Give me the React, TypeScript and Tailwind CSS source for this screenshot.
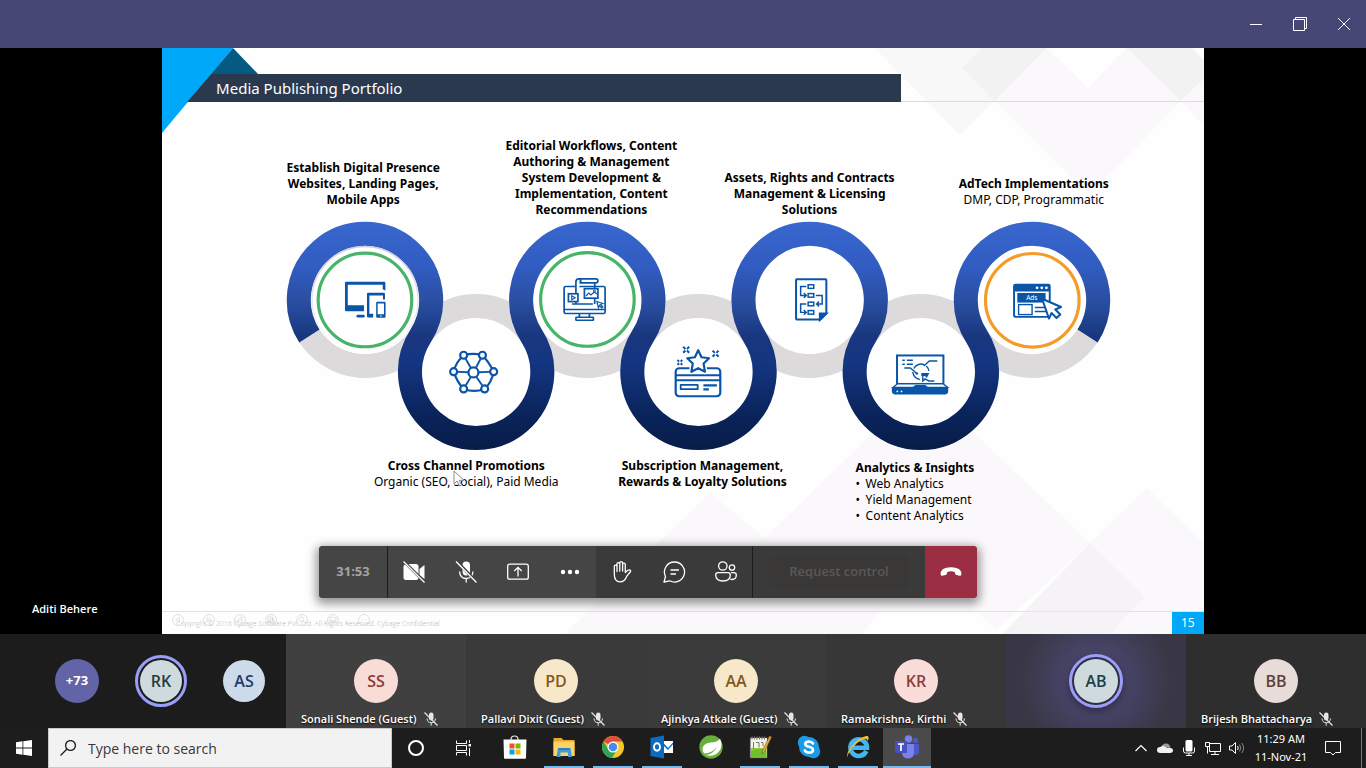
import React from "react";

const NAVY = "#0a55a8";

/* ---------- slide artwork ---------- */

function SlideBackdrop() {
  return (
    <svg className="absolute inset-0 h-full w-full" viewBox="162 48 1042 586" preserveAspectRatio="none" aria-hidden="true">
      <rect x="162" y="48" width="1042" height="586" fill="#fefefe" />
      <path d="M875 48H1047L960 135Z" fill="#f9f8f9" />
      <path d="M962 68L982 48H1047L995 101Z" fill="#f3f2f3" />
      <path d="M995 101L1047 48L1088 88L1127 48L1181 101L1090 195Z" fill="#faf8fa" />
      <path d="M1127 48H1192L1204 60V79L1181 101Z" fill="#f3f2f3" />
      <path d="M1181 101L1204 79V125Z" fill="#faf8fa" />
      <path d="M565 634L658 543L710 493L765 538L923 384L1090 543L997 630L977 612H881L862 634Z" fill="#faf8fb" />
      <path d="M1090 543L1147 488L1204 543V634H1007Z" fill="#faf8fb" />
      <path d="M1090 543L1145 597L1110 634H1003Z" fill="#f5f3f6" />
      <path d="M997 630L977 612H881L862 634H1000Z" fill="#fefefe" />
      <path d="M162 48H233L162 133Z" fill="#00a8fa" />
      <path d="M233 48L258 74H211Z" fill="#055a83" />
      <rect x="190" y="101" width="1014" height="1" fill="#b5e9f8" />
      <rect x="162" y="611" width="1042" height="1" fill="#c2effb" />
    </svg>
  );
}

function DevicesIcon() {
  return (
    <g fill={NAVY}>
      <path d="M345 283q0-1.200 1.200-1.200h38q1.200 0 1.200 1.200v7.500l-2.600-1.300v-4.500h-35v20.500h16.200v6h-17.800q-1.200 0-1.200-1.200z" />
      <rect x="356.500" y="314.800" width="8.200" height="2.800" rx="1.200" />
      <path d="M367 294q0-1.200 1.200-1.200h15.600q1.200 0 1.200 1.200v5.600h-2v-4.200h-13.600v18.400h3.800v3.800h-5q-1.200 0-1.200-1.200z" />
      <path fillRule="evenodd" d="M376.200 302.800q0-1 1-1h7.400q1 0 1 1v14q0 1-1 1h-7.400q-1 0-1-1zM377.700 303.600v10.800h6.300v-10.800z" />
      <circle cx="380.900" cy="316.100" r=".8" fill="#fff" />
    </g>
  );
}

function NetworkIcon() {
  const nodes: [number, number][] = [
    [463.7, 355.3], [482.5, 355.3], [493.7, 371.7], [484.7, 389], [463.7, 389], [453.7, 371.7],
  ];
  return (
    <g stroke={NAVY} strokeWidth="2.200" fill="none">
      <path d="M463.700 355.300Q473 352.500 482.500 355.300M482.500 355.300Q489 362 493.700 371.700M493.700 371.700Q492 382 484.700 389M484.700 389Q474 393 463.700 389M463.700 389Q457 382 453.700 371.700M453.700 371.700Q456 362 463.700 355.300" />
      {nodes.map(([x, y]) => (
        <path key={`s${x}${y}`} d={`M473.500 372.500L${x} ${y}`} strokeWidth="1.900" />
      ))}
      {nodes.map(([x, y]) => (
        <circle key={`n${x}${y}`} cx={x} cy={y} r="3.500" fill="#fff" />
      ))}
      <circle cx="473.500" cy="372.500" r="5" fill="#fff" />
    </g>
  );
}

function AuthoringIcon() {
  return (
    <g stroke={NAVY} strokeWidth="1.700" fill="none">
      <rect x="564.200" y="286.500" width="41" height="27" rx="1.500" fill="#fff" />
      <path d="M564.500 309.500h40.500M579.500 313.500v4M589.500 313.500v4" />
      <rect x="576" y="317.300" width="17.500" height="3" rx=".5" />
      <path d="M576 304V282q0-3.200 3-3.200h17q2 0 2 2t-2 2h-15.500v-1.500M594.800 282.800V304M572 304h21" fill="#fff" />
      <path d="M579.500 279q2 1 1 3.500" />
      <rect x="568.500" y="293.800" width="9.500" height="7.800" fill="#fff" />
      <path d="M571.800 295.800l3.500 2-3.500 2z" strokeWidth="1.100" />
      <rect x="584.500" y="288.700" width="13.500" height="9.500" fill="#fff" />
      <path d="M586 296l3-3 2 2 3.500-3 2.500 2" strokeWidth="1.200" />
      <circle cx="594.500" cy="291" r="1" strokeWidth="1" />
      <path d="M597 301.500l6 2-2.500 1 2.500 2.500-1.200 1-2.300-2.500-1 2.300z" strokeWidth="1.200" fill="#fff" />
    </g>
  );
}

function Sparkle({ x, y, r = 3 }: { x: number; y: number; r?: number }) {
  return (
    <path
      d={`M${x - r} ${y - r}l${r - 0.8} ${r - 0.8}M${x + r} ${y - r}l${0.8 - r} ${r - 0.8}M${x - r} ${y + r}l${r - 0.8} ${0.8 - r}M${x + r} ${y + r}l${0.8 - r} ${0.8 - r}`}
      strokeWidth="2"
    />
  );
}

function LoyaltyIcon() {
  const star = "M698.300 350.300l3.300 7 7.600 1-5.500 5.300 1.400 8.200-6.800-3.600-6.800 3.600 1.400-8.200-5.500-5.300 7.600-1z";
  return (
    <g stroke={NAVY} strokeWidth="2.200" fill="none" strokeLinejoin="round">
      <rect x="675.800" y="368.300" width="44.600" height="28" rx="3.500" fill="#fff" />
      <path d="M676 375.300h44.500M676 380.300h44.500" />
      <rect x="680.800" y="385" width="17" height="4.200" strokeWidth="1.800" />
      <path d="M703.500 385.500h13.500M703.500 389.500h5.500" />
      <path d={star} stroke="#fff" strokeWidth="5" fill="#fff" />
      <path d={star} fill="#fff" />
      <Sparkle x={686.3} y={349.8} />
      <Sparkle x={680} y={362.5} r={2.4} />
      <Sparkle x={715.7} y={353.7} />
    </g>
  );
}

function ContractIcon() {
  return (
    <g stroke={NAVY} strokeWidth="2" fill="none">
      <path d="M796.200 280q0-.8.800-.8h28.700q.8 0 .8.800v33.500l-6 6H797q-.8 0-.8-.8z" fill="#fff" />
      <path d="M820 319.800v-6.300h6.500z" fill={NAVY} />
      <g strokeWidth="1.500">
        <rect x="808.300" y="284.800" width="5.600" height="3.600" />
        <rect x="808.300" y="293.600" width="5.600" height="3.600" />
        <rect x="808.300" y="302.200" width="5.600" height="3.600" />
        <rect x="808.300" y="310.600" width="5.600" height="3.600" />
        <path d="M806.500 286.600h-5.700v8.800h5.200M804 293l2.400 2.400-2.400 2.400M816 295.400h6.300v8.600h-5.200M819.200 301.600l-2.400 2.400 2.400 2.400M806.500 304h-5.700v8.400h5.200M804 310l2.400 2.400-2.400 2.400" />
      </g>
    </g>
  );
}

function InsightsIcon() {
  return (
    <g stroke={NAVY} strokeWidth="2" fill="none">
      <rect x="897.200" y="355.500" width="46.400" height="28.500" fill="#fff" />
      <path d="M893 387.500l4.500-3.500h46l4.500 3.500z" strokeWidth="1.200" fill="#fff" />
      <path d="M892 387h21l2.500-2h10l2.500 2h20.400v4q0 3.500-3.500 3.500h-49.400q-3.500 0-3.500-3.500z" fill={NAVY} stroke="none" />
      <circle cx="897.500" cy="391.500" r=".9" fill="#fff" stroke="none" />
      <circle cx="901.700" cy="391.500" r=".9" fill="#fff" stroke="none" />
      <g strokeWidth="1.400">
        <path d="M902.500 360.300h2.500M907 360.300h6M902.500 364.300h2.500M907 364.300h6" />
        <path d="M904.500 368h6l6.500 5.500M924 366l5.500-5h8" />
        <path d="M914 368.500A8 8 0 0 1 924.500 364.800M926.500 366A8 8 0 0 1 929 371M913 372A8 8 0 0 0 920 379.500" />
        <path d="M923 375v6l2.200-2 3.800 2h5.500" />
      </g>
      <circle cx="917" cy="373.500" r="1.200" fill={NAVY} stroke="none" />
      <path d="M921.500 373h8l-2.500 5-2-2h-3.500z" fill={NAVY} stroke="none" />
    </g>
  );
}

function AdsIcon() {
  return (
    <g>
      <path fillRule="evenodd" d="M1013.300 286q0-2.300 2.300-2.300h33q2.300 0 2.300 2.300v29.500q0 2.300-2.300 2.300h-33q-2.300 0-2.300-2.300zM1015.200 291.500v23.300q0 1.200 1.200 1.200h31.400q1.200 0 1.200-1.200v-23.300z" fill={NAVY} />
      <g fill="#fff">
        <circle cx="1037.300" cy="287.800" r="1.400" />
        <circle cx="1042" cy="287.800" r="1.400" />
        <circle cx="1046.600" cy="287.800" r="1.400" />
      </g>
      <rect x="1017.500" y="293" width="28.300" height="9.600" fill={NAVY} />
      <text x="1032" y="300.300" fill="#fff" fontSize="6.500" fontWeight="400" textAnchor="middle">Ads</text>
      <rect x="1018.800" y="304.600" width="13.500" height="10" fill="none" stroke={NAVY} strokeWidth="1.400" />
      <path d="M1035 307.500h10M1035 311.500h13" stroke={NAVY} strokeWidth="1.500" />
      <path d="M1042.300 298.800l19 8.200-5.800 2.500 5 5-3.800 3.600-5-5-2.500 5.500z" fill="#fff" stroke={NAVY} strokeWidth="2" strokeLinejoin="round" />
    </g>
  );
}

function PortfolioChain() {
  const top = [365, 587.4, 809.8, 1032.2];
  const bottom = [476.2, 698.6, 921];
  return (
    <svg className="block w-full" viewBox="254 220 889 232" role="img" aria-label="Portfolio areas">
      <defs>
        <linearGradient id="ribbon" gradientUnits="userSpaceOnUse" x1="0" y1="222" x2="0" y2="450">
          <stop offset="0" stopColor="#3867cf" />
          <stop offset=".2" stopColor="#315cc0" />
          <stop offset=".36" stopColor="#294d9f" />
          <stop offset=".5" stopColor="#19377f" />
          <stop offset=".62" stopColor="#143581" />
          <stop offset=".84" stopColor="#0a245c" />
          <stop offset="1" stopColor="#081c48" />
        </linearGradient>
        <linearGradient id="rim" x1="0" y1="0" x2="0" y2="1">
          <stop offset="0" stopColor="#ccccd8" />
          <stop offset="1" stopColor="#ffffff" />
        </linearGradient>
      </defs>
      {top.map((x) => <circle key={x} cx={x} cy="300" r="66" fill="#fff" stroke="#dcdadb" strokeWidth="24" />)}
      {bottom.map((x) => <circle key={x} cx={x} cy="372" r="66" fill="#fff" stroke="#dcdadb" strokeWidth="24" />)}
      {top.map((x) => <circle key={x} cx={x} cy="300" r="54" fill="#fff" />)}
      <path
        d="M309.400 336A66.200 66.200 0 1 1 420.600 336A66.200 66.200 0 1 0 531.800 336A66.200 66.200 0 1 1 643 336A66.200 66.200 0 1 0 754.200 336A66.200 66.200 0 1 1 865.400 336A66.200 66.200 0 1 0 976.600 336A66.200 66.200 0 1 1 1087.800 336"
        fill="none"
        stroke="url(#ribbon)"
        strokeWidth="24"
      />
      <circle cx="365" cy="299.500" r="53" fill="#fff" stroke="url(#rim)" strokeWidth="1.500" />
      <circle cx="365" cy="300" r="46.800" fill="#fff" stroke="#48b469" strokeWidth="3.200" />
      <circle cx="587.500" cy="299.500" r="46.800" fill="#fff" stroke="#48b469" strokeWidth="3.200" />
      <circle cx="1032.500" cy="300.300" r="46.800" fill="#fff" stroke="#f49b28" strokeWidth="3.200" />
      <DevicesIcon />
      <NetworkIcon />
      <AuthoringIcon />
      <LoyaltyIcon />
      <ContractIcon />
      <InsightsIcon />
      <AdsIcon />
    </svg>
  );
}

function PresenterControls() {
  const glyphs = [
    "M10 4.500L5 7.500l5 3z",
    "M5.500 4.500l5 3-5 3z",
    "M4 11.500l1-3 5.500-5 1.500 1.500-5.500 5z",
    "M4 4h6v6H4zM6.500 6.500H12V12H6.500z",
    "M4 7a3 3 0 1 0 6 0 3 3 0 1 0-6 0M9.500 9.500L12 12",
    "M4 4.500h8v6H4zM5 8.500h6",
    "M4.500 7.500h1M7.500 7.500h1M10.500 7.500h1",
  ];
  return (
    <div className="absolute bottom-2 left-2.5 flex gap-[19px]">
      {glyphs.map((d) => (
        <svg key={d} className="size-3" viewBox="0 0 16 16" fill="none" stroke="#d6d6d6" aria-hidden="true">
          <circle cx="8" cy="8" r="7.300" />
          <path d={d} />
        </svg>
      ))}
    </div>
  );
}

function Slide() {
  return (
    <section className="relative flex aspect-[16/9] h-full flex-col bg-white font-['Noto_Sans','Open_Sans',sans-serif] text-[12px] leading-4 text-black">
      <SlideBackdrop />
      <header className="relative mt-[26px] flex h-7 w-[739px] items-center bg-[#2b394f] pl-[54px] text-[15px] text-white [clip-path:polygon(49px_0,100%_0,100%_100%,25px_100%)]">
        <h1>Media Publishing Portfolio</h1>
      </header>
      <div className="relative flex flex-col pr-[61px] pl-[92px]">
        <div className="grid h-[118px] grid-cols-4 items-end text-center font-bold whitespace-nowrap">
          <p className="pr-1 pb-3">Establish Digital Presence<br />Websites, Landing Pages,<br />Mobile Apps</p>
          <p className="pb-[2px] pl-2">Editorial Workflows, Content<br />Authoring &amp; Management<br />System Development &amp;<br />Implementation, Content<br />Recommendations</p>
          <p className="pb-[2px]">Assets, Rights and Contracts<br />Management &amp; Licensing<br />Solutions</p>
          <p className="pb-3 pl-1">AdTech Implementations<br /><span className="font-normal">DMP, CDP, Programmatic</span></p>
        </div>
        <PortfolioChain />
        <div className="grid grid-cols-3 px-[111px] pt-[6px] whitespace-nowrap">
          <p className="pr-5 text-center font-bold">Cross Channel Promotions<br /><span className="font-normal">Organic (SEO, Social), Paid Media</span></p>
          <p className="pl-2 text-center font-bold">Subscription Management,<br />Rewards &amp; Loyalty Solutions</p>
          <div className="pt-[2px] pl-[46px]">
            <p className="font-bold">Analytics &amp; Insights</p>
            <ul>
              {["Web Analytics", "Yield Management", "Content Analytics"].map((t) => (
                <li key={t} className="flex before:w-[10px] before:content-['•']">{t}</li>
              ))}
            </ul>
          </div>
        </div>
      </div>
      <footer className="relative mt-auto flex h-[22px] items-stretch justify-between">
        <p className="pt-1 pl-3.5 font-['Open_Sans','Noto_Sans',sans-serif] text-[7px] font-light text-[#b5b5b5]">Copyright © 2016 Cybage Software Pvt. Ltd. All Rights Reserved. Cybage Confidential</p>
        <span className="flex w-8 items-center justify-center bg-[#00a8fa] text-[12px] text-white">15</span>
      </footer>
      <PresenterControls />
      <svg className="absolute top-[422px] left-[291px] h-[18px] w-3" viewBox="0 0 12 18" aria-hidden="true">
        <path d="M1 1v13l3-3 2.500 5 2-1-2.300-4.700H11z" fill="#fff" stroke="#8d8a94" />
      </svg>
    </section>
  );
}

/* ---------- call toolbar ---------- */

function CallIcon({ name }: { name: string }) {
  const common = { className: "size-6", viewBox: "0 0 24 24", fill: "none", stroke: "#fff", strokeWidth: 1.3, "aria-hidden": true } as const;
  switch (name) {
    case "Turn camera on":
      return (
        <svg {...common}>
          <path d="M3.500 4H14q2.500 0 2.500 2.500v11Q16.500 20 14 20H4q-2.500 0-2.500-2.500v-11Q1.500 5 3.500 4zM17.500 9l5-4v14l-5-4z" fill="#fff" stroke="none" />
          <path d="M2 1.500L23 22.500" stroke="#454545" strokeWidth="3" />
          <path d="M1.500 1.500L22.500 22.500" />
        </svg>
      );
    case "Unmute":
      return (
        <svg {...common}>
          <rect x="8.500" y="1.500" width="7.500" height="14" rx="3.700" fill="#fff" stroke="none" />
          <path d="M5.500 11.500q.5 7 6.700 7t6.800-7M12.200 18.500v4" />
          <path d="M3 1.500L23 22.500" stroke="#454545" strokeWidth="3" />
          <path d="M2 1.500L22.500 22.500" />
        </svg>
      );
    case "Share content":
      return (
        <svg {...common}>
          <rect x="1.700" y="4.200" width="20.600" height="15" rx="2" />
          <path d="M12 16.500V7.500M8.300 11L12 7.300l3.700 3.700" />
        </svg>
      );
    case "More actions":
      return (
        <svg {...common} fill="#fff" stroke="none">
          <circle cx="5" cy="12" r="2.200" /><circle cx="12" cy="12" r="2.200" /><circle cx="19" cy="12" r="2.200" />
        </svg>
      );
    case "Raise hand":
      return (
        <svg {...common} strokeLinejoin="round" strokeLinecap="round">
          <path d="M4.300 14V6.500q0-1.400 1.300-1.400T7 6.500V4q0-1.400 1.400-1.400T9.800 4V3q0-1.400 1.400-1.400T12.600 3v1.500q0-1.400 1.300-1.400t1.400 1.400v8q1.500-1.800 3-2.500 1.500-.5 2.300.7.300.5-.4 1.300l-3.400 4.200q-2 5.600-6.800 5.600-5.700 0-5.700-7.800M7 6.500v5M9.800 4v7M12.600 4.500V11" />
        </svg>
      );
    case "Show conversation":
      return (
        <svg {...common} strokeLinecap="round" strokeLinejoin="round">
          <path d="M12.500 2a10 10 0 1 1-4.700 18.800L2 22l1.500-5.500A10 10 0 0 1 12.500 2zM9 10h7.500M9 14h4.500" />
        </svg>
      );
    default:
      return (
        <svg {...common}>
          <circle cx="8.800" cy="6" r="4.200" /><circle cx="18" cy="7.500" r="2.700" />
          <path d="M4 12.700h10q2.300 0 2.300 2.300 0 6-7.300 6t-7.300-6q0-2.300 2.300-2.300zM17 12.700h3q2.300 0 2.300 2.300 0 4.500-4.300 4.500-1 0-1.700-.3" />
        </svg>
      );
  }
}

function CallToolbar() {
  return (
    <div className="absolute bottom-9 left-[319px] flex h-[52px] overflow-hidden rounded bg-[#3b3a3a] shadow-[0_3px_10px_3px_rgba(0,0,0,0.4)]">
      <div className="flex w-[69px] items-center justify-center border-r border-[#1c1c1c] bg-[#454545] text-[13px] font-bold text-[#a3a3a3]">31:53</div>
      <div className="flex bg-[#454545]">
        {["Turn camera on", "Unmute", "Share content", "More actions"].map((n) => (
          <button key={n} aria-label={n} className="flex w-[52px] items-center justify-center"><CallIcon name={n} /></button>
        ))}
      </div>
      <div className="flex border-r border-[#1c1c1c]">
        {["Raise hand", "Show conversation", "Show participants"].map((n) => (
          <button key={n} aria-label={n} className="flex w-[52px] items-center justify-center"><CallIcon name={n} /></button>
        ))}
      </div>
      <div className="flex items-center px-4">
        <button className="h-8 w-[140px] rounded-sm bg-[#393836] text-[13px] font-semibold text-[#5a5958]">Request control</button>
      </div>
      <button aria-label="Hang up" className="flex w-[52px] items-center justify-center bg-[#9c2e43]">
        <svg className="size-6" viewBox="0 0 24 24" aria-hidden="true">
          <path d="M12 7.200q6 0 9 2.800 2 2 1.400 4.500-.3 1.500-1.800 1.200l-3-.6q-1.100-.2-1.400-1.300l-.5-1.900Q12 10.800 8.300 11.900l-.5 1.900q-.3 1.100-1.400 1.300l-3 .6q-1.500.3-1.800-1.200Q1 12 3 10q3-2.800 9-2.800z" fill="#fff" />
        </svg>
      </button>
    </div>
  );
}

/* ---------- participants ---------- */

function MutedMic() {
  return (
    <svg className="size-3.5 shrink-0" viewBox="0 0 14 14" fill="none" stroke="#e6e6e6" role="img" aria-label="Muted">
      <rect x="5" y=".5" width="4.500" height="8" rx="2.200" fill="#e6e6e6" stroke="none" />
      <path d="M3 6.500q.3 4.200 4.200 4.200t4.300-4.200M7.200 10.700v3" />
      <path d="M.5.500l13 13" strokeWidth="1.200" />
    </svg>
  );
}

const tiles = [
  { initials: "SS", name: "Sonali Shende (Guest)", tile: "bg-[#404040]", avatar: "bg-[#fadcd7] text-[#8a3a35]" },
  { initials: "PD", name: "Pallavi Dixit (Guest)", tile: "bg-[#3a3a3a]", avatar: "bg-[#f7e8c9] text-[#80581a]" },
  { initials: "AA", name: "Ajinkya Atkale (Guest)", tile: "bg-[#3b3b3b]", avatar: "bg-[#f7e8c9] text-[#80581a]" },
  { initials: "KR", name: "Ramakrishna, Kirthi", tile: "bg-[#373737]", avatar: "bg-[#fadcd9] text-[#8a4038]" },
  { initials: "AB", name: "", tile: "bg-[radial-gradient(circle_at_center,#57547f_0%,#454264_35%,#393745_75%)]", avatar: "bg-[#cfdadf] text-[#1f3d42]" },
  { initials: "BB", name: "Brijesh Bhattacharya", tile: "bg-[#2e2e2e]", avatar: "bg-[#e8dcd8] text-[#5e3f38]" },
];

function Participants() {
  return (
    <section aria-label="Participants" className="flex h-[94px] shrink-0 bg-[#1c1c1c] font-semibold">
      <div className="flex w-[286px] shrink-0 items-center gap-9 pl-[55px]">
        <button className="flex size-11 items-center justify-center rounded-full bg-[#6264a7] text-[13px] font-bold text-white">+73</button>
        <div className="flex size-[52px] items-center justify-center rounded-full border-[3px] border-[#9b9ef8]">
          <span className="flex size-[42px] items-center justify-center rounded-full bg-[#cfdadf] text-base text-[#1f3d42]">RK</span>
        </div>
        <span className="flex size-[42px] items-center justify-center rounded-full bg-[#cddaea] text-base text-[#1c3a66]">AS</span>
      </div>
      {tiles.map((t) => (
        <div key={t.initials} className={`relative flex min-w-0 flex-1 items-center justify-center ${t.tile}`}>
          {t.name ? (
            <>
              <span className={`flex size-11 items-center justify-center rounded-full text-base ${t.avatar}`}>{t.initials}</span>
              <p className="absolute bottom-0 left-[15px] flex items-center gap-[7px] text-[11px] leading-[18px] whitespace-nowrap text-white [text-shadow:0_1px_2px_#000]">
                {t.name}
                <MutedMic />
              </p>
            </>
          ) : (
            <div className="flex size-[54px] items-center justify-center rounded-full border-[3px] border-[#9b9ef8] bg-[#2f2e45] shadow-[0_3px_8px_rgba(0,0,0,0.4)]">
              <span className={`flex size-11 items-center justify-center rounded-full text-base ${t.avatar}`}>{t.initials}</span>
            </div>
          )}
        </div>
      ))}
    </section>
  );
}

/* ---------- taskbar ---------- */

function StoreIcon() {
  return (
    <svg className="size-6" viewBox="0 0 24 24" aria-hidden="true">
      <path d="M8 6V4.500Q8 1 11.500 1T15 4.500V6" fill="none" stroke="#e8e8e8" strokeWidth="1.200" />
      <path d="M.5 4.500h23L23 23q0 .8-.8.800H1.800Q1 23.800 1 23z" fill="#fff" />
      <path d="M6.500 8.500h5v5h-5z" fill="#f04f23" /><path d="M12.500 8.500h5v5h-5z" fill="#7db902" />
      <path d="M6.500 14.500h5v5h-5z" fill="#00a3ee" /><path d="M12.500 14.500h5v5h-5z" fill="#fdb900" />
    </svg>
  );
}
function FolderIcon() {
  return (
    <svg className="size-6" viewBox="0 0 24 24" aria-hidden="true">
      <path d="M1.500 3h8l2 2h11v16h-21z" fill="#e8a92c" />
      <path d="M1.500 6.500h21v14.500h-21z" fill="#fcd364" />
      <path d="M6 13h12.500l1.500 9h-4v-4.500H8.500V22h-4z" fill="#3f9bdc" />
      <path d="M6.500 13h11.500v2H6.300z" fill="#2c7fc0" />
    </svg>
  );
}
function ChromeIcon() {
  return (
    <svg className="size-6" viewBox="0 0 24 24" aria-hidden="true">
      <circle cx="12" cy="12" r="11" fill="#f6c926" />
      <path d="M12 12L2.500 6.500A11 11 0 0 1 21.500 6.500H12z" fill="#dd4f3c" />
      <path d="M2.470 6.500A11 11 0 0 0 11 23l5-8.500-8.500 0z" fill="#2fa456" />
      <circle cx="12" cy="12" r="5.500" fill="#fff" /><circle cx="12" cy="12" r="4.300" fill="#4a8af4" />
    </svg>
  );
}
function OutlookIcon() {
  return (
    <svg className="size-6" viewBox="0 0 24 24" aria-hidden="true">
      <path d="M13 6h10v12H13z" fill="#fff" />
      <path d="M13.500 8l4.500 5 5-5.500v1.800L18 15l-4.500-4.500z" fill="#0a66b8" />
      <path d="M.5 3L14 .5v23L.5 21z" fill="#0b6dc0" />
      <ellipse cx="7" cy="12" rx="3" ry="3.700" fill="none" stroke="#fff" strokeWidth="1.900" />
    </svg>
  );
}
function SpringIcon() {
  return (
    <svg className="size-6" viewBox="0 0 24 24" aria-hidden="true">
      <circle cx="12" cy="12" r="11.700" fill="#69ad3c" />
      <path d="M21 3.500Q18.500 7.500 11.500 7.500 3.500 8.300 3.500 14.500q.2 2.300 1.800 4Q13 18 18 12q-3.500 7-11.500 8Q14.500 22.500 19.500 17T21 3.500z" fill="#fff" />
    </svg>
  );
}
function NotepadIcon() {
  return (
    <svg className="size-6" viewBox="0 0 24 24" aria-hidden="true">
      <path d="M2 2.500h17.500V23H2z" fill="#f4f4ea" stroke="#333" />
      <path d="M3 13h15.500v9H3z" fill="#8fd03e" />
      <path d="M3 16q7-4 15.500-1v7H3z" fill="#6fbf2f" />
      <path d="M4 1.500v3M6.500 1.500v3M9 1.500v3M11.500 1.500v3M14 1.500v3M16.500 1.500v3" stroke="#777" strokeWidth="1.200" />
      <path d="M5.500 7v7M8 7.500h3v5M13 7.500h2v4" stroke="#6d7d60" fill="none" />
      <path d="M21.500 1l2 1-7 15-2.500 2 .5-3.500z" fill="#f2a63a" stroke="#7b5a22" strokeWidth=".6" />
    </svg>
  );
}
function SkypeIcon() {
  return (
    <svg className="size-6" viewBox="0 0 24 24" aria-hidden="true">
      <circle cx="7.500" cy="7.500" r="6.700" fill="#1a9be8" /><circle cx="16.500" cy="16.500" r="6.700" fill="#1a9be8" />
      <circle cx="12" cy="12" r="10" fill="#1a9be8" />
      <path d="M16 8.500Q14.800 6.600 12 6.600 8.300 6.600 8.300 9q0 2 3.700 2.700 4 .8 4 3.200 0 2.600-4 2.600-3 0-4.300-2.200" fill="none" stroke="#fff" strokeWidth="2.600" strokeLinecap="round" />
    </svg>
  );
}
function ExplorerIcon() {
  return (
    <svg className="size-6" viewBox="0 0 24 24" aria-hidden="true">
      <path d="M20.300 16A8.300 8.300 0 1 1 21 12.800H7" fill="none" stroke="#42b8ee" strokeWidth="4.600" />
      <path d="M3 23.500Q-1.500 21 5 12T21 .8Q24 1.500 21.500 6.500 21.500 2.500 16.500 4.500T5.500 14 3 23.500z" fill="#f2c230" />
    </svg>
  );
}
function TeamsIcon() {
  return (
    <svg className="size-6" viewBox="0 0 24 24" aria-hidden="true">
      <circle cx="20.500" cy="5.500" r="2.700" fill="#4f57c8" /><circle cx="13.500" cy="4" r="3.700" fill="#7a82ea" />
      <path d="M17 9h7v7q0 4-3.500 4T17 16z" fill="#4f57c8" />
      <path d="M7 9h12v8q0 6.500-6 6.500T7 17z" fill="#7a82ea" />
      <path d="M0 6h12v12H0z" fill="#4850bd" />
      <path d="M3 9h6M6 9v7" stroke="#fff" strokeWidth="1.700" />
    </svg>
  );
}

const apps = [
  { label: "Microsoft Store", icon: <StoreIcon />, state: "" },
  { label: "File Explorer", icon: <FolderIcon />, state: "open" },
  { label: "Google Chrome", icon: <ChromeIcon />, state: "open" },
  { label: "Outlook", icon: <OutlookIcon />, state: "open" },
  { label: "Spring Tool Suite", icon: <SpringIcon />, state: "" },
  { label: "Notepad++", icon: <NotepadIcon />, state: "open" },
  { label: "Skype", icon: <SkypeIcon />, state: "open" },
  { label: "Internet Explorer", icon: <ExplorerIcon />, state: "open" },
  { label: "Microsoft Teams", icon: <TeamsIcon />, state: "active" },
];

function Taskbar() {
  return (
    <footer className="flex h-10 shrink-0 bg-[#1d1d1d] text-white">
      <button aria-label="Start" className="flex w-12 items-center justify-center">
        <svg className="size-4" viewBox="0 0 16 16" fill="#fff" aria-hidden="true">
          <path d="M0 2.200l6.500-.9v6.300H0zM7.300 1.200L16 0v7.600H7.300zM0 8.400h6.500v6.300L0 13.800zM7.300 8.400H16V16l-8.700-1.200z" />
        </svg>
      </button>
      <label className="flex w-[344px] shrink items-center border border-[#c9c9c9] bg-[#f2f2f2] pl-[11px]">
        <svg className="size-4 shrink-0" viewBox="0 0 16 16" fill="none" stroke="#1b1b1b" strokeWidth="1.300" aria-hidden="true">
          <circle cx="10.500" cy="5.500" r="4.900" /><path d="M7 9L.5 15.500" />
        </svg>
        <input aria-label="Search" placeholder="Type here to search" className="ml-3 min-w-0 flex-1 bg-transparent text-[14px] text-black outline-none placeholder:text-[#383838]" />
      </label>
      <button aria-label="Cortana" className="flex w-12 items-center justify-center">
        <span className="size-4 rounded-full border-2 border-white" />
      </button>
      <button aria-label="Task view" className="flex w-12 items-center justify-center">
        <svg className="size-4" viewBox="0 0 16 16" fill="none" stroke="#fff" aria-hidden="true">
          <path d="M.5.500v3h10v-3M.5 15.500v-3h10v3M.5 5.500h10v5H.5zM13.500 0v3M13.500 8v8" />
          <path d="M12.500 4h2.500v2.500h-2.500z" fill="#fff" stroke="none" />
        </svg>
      </button>
      <nav aria-label="Pinned applications" className="ml-[3px] flex gap-px">
        {apps.map((a) => (
          <button key={a.label} aria-label={a.label} className={`flex w-12 flex-col items-center ${a.state === "active" ? "bg-[#4a4a4a]" : ""}`}>
            <span className="flex flex-1 items-center">{a.icon}</span>
            <span className={`h-0.5 ${a.state === "active" ? "w-12 bg-[#76b9ed]" : a.state === "open" ? "w-10 bg-[#76b9ed]" : "w-10"}`} />
          </button>
        ))}
      </nav>
      <div className="ml-auto flex items-center gap-2">
        <button aria-label="Show hidden icons">
          <svg className="block h-2 w-3" viewBox="0 0 12 8" fill="none" stroke="#fff" strokeWidth="1.200" aria-hidden="true"><path d="M.5 7L6 1.500 11.500 7" /></svg>
        </button>
        <svg className="ml-0.5 h-4 w-4" viewBox="0 0 16 16" aria-label="OneDrive" role="img">
          <path d="M4 8Q5 3.500 9 3.500q3.500 0 4.500 4z" fill="#9a9a9a" />
          <path d="M3.500 13Q0 13 0 10t3.300-3q3-2 5.700.5 1 .7 2 .3 5-.3 5 2.500 0 2.700-3 2.700z" fill="#f0f0f0" />
        </svg>
        <svg className="h-4 w-4" viewBox="0 0 16 16" fill="none" stroke="#fff" aria-label="Microphone" role="img">
          <rect x="4.500" y="0" width="7" height="11.500" rx="1.500" fill="#fff" stroke="none" />
          <path d="M2.500 7.500v3.500q0 2 2 2h7q2 0 2-2V7.500M8 13v2.500M5 15.500h6" />
        </svg>
        <svg className="h-4 w-4" viewBox="0 0 16 16" fill="none" stroke="#fff" aria-label="Network" role="img">
          <path d="M4.500 3.500h11v8h-11zM10 11.500v3M6 14.500h8M.5 2.500h4v4h-4zM2.500 6.500v7" />
        </svg>
        <svg className="h-4 w-4" viewBox="0 0 16 16" fill="none" stroke="#fff" aria-label="Volume" role="img">
          <path d="M.5 6h2.500L6.500 2.500v11L3 10H.5z" /><path d="M8.500 6q1.500 2 0 4" /><path d="M10.500 4.500q2.500 3.500 0 7M12.800 3q3.500 5 0 10" stroke="#888" />
        </svg>
        <time className="w-14 text-center font-['Noto_Sans','Open_Sans',sans-serif] text-[11px] leading-[18px] whitespace-nowrap">11:29 AM<br />11-Nov-21</time>
        <button aria-label="Notifications" className="ml-2">
          <svg className="block size-4" viewBox="0 0 16 16" fill="none" stroke="#fff" aria-hidden="true"><path d="M.5 1.500h15v11h-5L8 15l-2.500-2.500h-5z" /></svg>
        </button>
        <span className="ml-3 h-10 w-[5px] border-l border-[#777]" />
      </div>
    </footer>
  );
}

/* ---------- window ---------- */

export default function App() {
  return (
    <div className="flex h-screen min-h-[768px] flex-col overflow-hidden bg-black font-['Open_Sans','Noto_Sans',sans-serif]">
      <div className="flex h-12 shrink-0 items-center justify-end gap-[30px] bg-[#464775] pr-4">
        <button aria-label="Minimise"><span className="block h-px w-3 bg-white" /></button>
        <button aria-label="Restore">
          <svg className="block size-4" viewBox="0 0 16 16" fill="none" stroke="#fff" aria-hidden="true"><path d="M1.500 3.500h11v11h-11zM3.500 3.500v-2h11v11h-2" /></svg>
        </button>
        <button aria-label="Close">
          <svg className="block size-3" viewBox="0 0 12 12" fill="none" stroke="#fff" aria-hidden="true"><path d="M0 0l12 12M12 0L0 12" /></svg>
        </button>
      </div>
      <main className="relative flex min-h-0 flex-1 justify-center">
        <Slide />
        <span className="absolute bottom-4 left-8 text-[11px] leading-[18px] font-semibold text-white">Aditi Behere</span>
        <CallToolbar />
      </main>
      <Participants />
      <Taskbar />
    </div>
  );
}
